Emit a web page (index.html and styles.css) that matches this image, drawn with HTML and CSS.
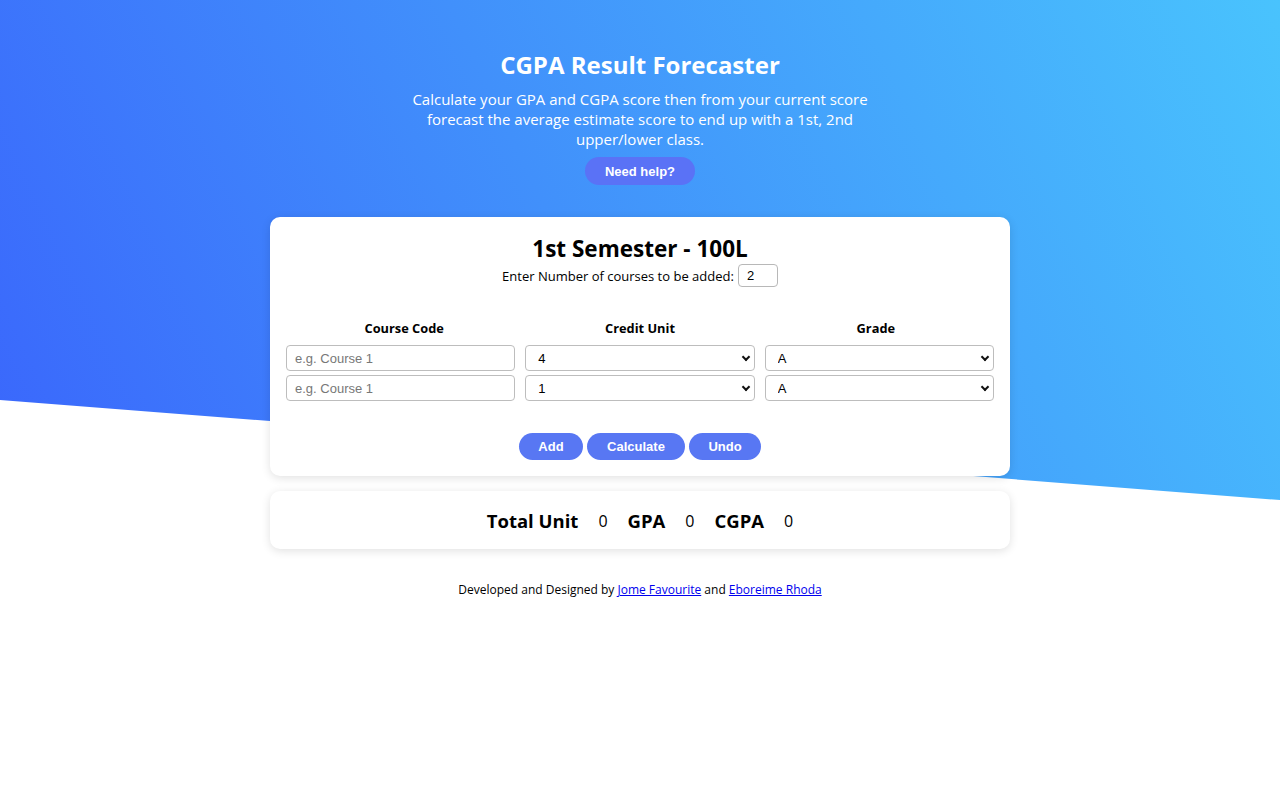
FILE: index.html
```html
<!DOCTYPE html>
<html lang="en">
<head>
<meta charset="utf-8">
<title>CGPA Result Forecaster</title>
<link rel="stylesheet" href="styles.css">
</head>
<body>
<div class="backdrop"></div>
<main class="page">
  <header class="hero">
    <h1 class="hero-title">CGPA Result Forecaster</h1>
    <p class="hero-text">Calculate your GPA and CGPA score then from your current score forecast the average estimate score to end up with a 1st, 2nd upper/lower class.</p>
    <button class="pill help-btn">Need help?</button>
  </header>

  <section class="card semester">
    <h2 class="sem-title">1st Semester - 100L</h2>
    <div class="count-row">
      <label for="count">Enter Number of courses to be added:</label>
      <input id="count" class="count-input" type="text" value="2">
    </div>
    <div class="course-grid">
      <div class="col-head head-code">Course Code</div>
      <div class="col-head">Credit Unit</div>
      <div class="col-head head-grade">Grade</div>

      <input class="field" type="text" placeholder="e.g. Course 1">
      <div class="select-wrap"><select class="field"><option>4</option></select></div>
      <div class="select-wrap"><select class="field"><option>A</option></select></div>

      <input class="field" type="text" placeholder="e.g. Course 1">
      <div class="select-wrap"><select class="field"><option>1</option></select></div>
      <div class="select-wrap"><select class="field"><option>A</option></select></div>
    </div>
    <div class="actions">
      <button class="pill act-add">Add</button>
      <button class="pill act-calc">Calculate</button>
      <button class="pill act-undo">Undo</button>
    </div>
  </section>

  <section class="card result">
    <span class="res-label">Total Unit</span><span class="res-val">0</span>
    <span class="res-label">GPA</span><span class="res-val">0</span>
    <span class="res-label">CGPA</span><span class="res-val">0</span>
  </section>

  <footer class="credits">Developed and Designed by <a href="#">Jome Favourite</a> and <a href="#">Eboreime Rhoda</a></footer>
</main>
</body>
</html>
```

FILE: styles.css
```css
* { box-sizing: border-box; }

html, body {
  margin: 0;
  padding: 0;
  background: #ffffff;
}

body {
  font-family: "Open Sans", "Noto Sans", sans-serif;
  color: #000;
  position: relative;
  min-height: 800px;
}

.backdrop {
  position: absolute;
  top: 0;
  left: 0;
  width: 100%;
  height: 500px;
  background: linear-gradient(65deg, #3a66fc 0%, #4190fb 45%, #49c3fd 100%);
  clip-path: polygon(0 0, 100% 0, 100% 100%, 0 80%);
  z-index: 0;
}

.page {
  position: relative;
  z-index: 1;
  display: flex;
  flex-direction: column;
  align-items: center;
  padding-top: 48px;
}

.hero {
  display: flex;
  flex-direction: column;
  align-items: center;
  color: #fff;
  text-align: center;
}

.hero-title {
  margin: 0;
  font-size: 24px;
  line-height: 34px;
  font-weight: 700;
}

.hero-text {
  margin: 7px 0 0;
  width: 470px;
  font-size: 15px;
  line-height: 20px;
}

.pill {
  border: none;
  border-radius: 14px;
  background: #5877f3;
  color: #fff;
  font-family: "Liberation Sans", Arial, sans-serif;
  font-weight: 700;
  font-size: 13px;
  height: 27px;
  cursor: pointer;
}

.help-btn {
  margin-top: 8px;
  width: 110px;
  height: 28px;
  background: #5a72f6;
}

.card {
  width: 740px;
  background: #fff;
  border-radius: 10px;
  box-shadow: 0 2px 10px rgba(0, 0, 0, 0.12);
}

.semester {
  margin-top: 32px;
  padding: 17px 16px 16px;
  display: flex;
  flex-direction: column;
  align-items: center;
}

.sem-title {
  margin: 0;
  font-size: 22.5px;
  line-height: 30px;
  font-weight: 700;
}

.count-row {
  display: flex;
  align-items: center;
  gap: 4px;
  font-size: 13px;
}

.count-input {
  width: 40px;
  height: 23px;
  border: 1px solid #b8b8b8;
  border-radius: 4px;
  padding: 0 8px;
  font-family: "Liberation Sans", Arial, sans-serif;
  font-size: 13px;
  color: #000;
}

.course-grid {
  margin-top: 32px;
  width: 100%;
  display: grid;
  grid-template-columns: 1fr 1fr 1fr;
  column-gap: 10px;
  row-gap: 4px;
}

.col-head {
  text-align: center;
  font-size: 12.8px;
  font-weight: 700;
  line-height: 18px;
  margin-bottom: 4px;
}

.head-code { padding-left: 7px; }
.head-grade { padding-right: 7px; }

.field {
  width: 100%;
  height: 26px;
  border: 1px solid #bdbdbd;
  border-radius: 4px;
  background: #fff;
  font-family: "Liberation Sans", Arial, sans-serif;
  font-size: 13px;
  color: #000;
  padding: 0 8px;
}

.field::placeholder {
  color: #777;
}

select.field {
  appearance: none;
  -webkit-appearance: none;
  padding: 0 12px;
}

.select-wrap {
  position: relative;
}

.select-wrap::after {
  content: "";
  position: absolute;
  right: 6px;
  top: 9px;
  width: 4px;
  height: 4px;
  border-right: 2px solid #111;
  border-bottom: 2px solid #111;
  transform: rotate(45deg);
  pointer-events: none;
}

.actions {
  margin-top: 32px;
  display: flex;
  gap: 4px;
}

.act-add { width: 64px; }
.act-calc { width: 98px; }
.act-undo { width: 72px; }

.result {
  margin-top: 15px;
  height: 58px;
  display: flex;
  align-items: center;
  justify-content: center;
}

.res-label {
  font-size: 18.5px;
  font-weight: 700;
}

.res-val {
  font-size: 16px;
  margin: 0 20px;
  position: relative;
  top: 1px;
}

.res-val:last-child {
  margin-right: 0;
}

.credits {
  margin-top: 33px;
  font-size: 12px;
  line-height: 16px;
}

.credits a {
  color: #0000ee;
}
```
